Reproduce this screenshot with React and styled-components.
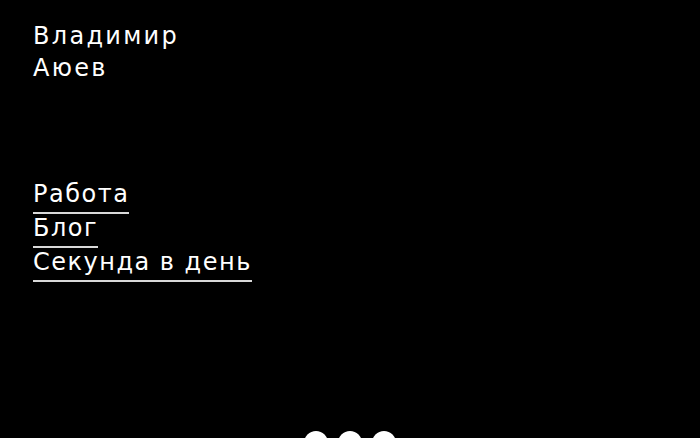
import React from 'react'
import styled, { createGlobalStyle } from 'styled-components'

const Global = createGlobalStyle`
  html, body {
    margin: 0;
    padding: 0;
    background: #000;
    overflow: hidden;
  }
  * { box-sizing: border-box; }
`

const Page = styled.div`
  height: 100vh;
  background: #000;
  color: #fff;
  font-family: "DejaVu Sans", "Liberation Sans", sans-serif;
  display: flex;
  flex-direction: column;
  padding: 20px 33px 0;
  overflow: hidden;
`

const Name = styled.div`
  font-size: 24px;
  line-height: 32px;
  letter-spacing: 2.3px;
`

const Nav = styled.nav`
  margin-top: 97px;
  display: flex;
  flex-direction: column;
  align-items: flex-start;
`

const Link = styled.a`
  font-size: 24px;
  line-height: 26px;
  color: #fff;
  text-decoration: none;
  border-bottom: 2px solid #d9d9d9;
  padding-bottom: 5px;
  margin-bottom: 1px;
  letter-spacing: 1.5px;
`

const Dots = styled.div`
  margin-top: auto;
  display: flex;
  justify-content: center;
  gap: 10px;
  height: 7px;
`

const Dot = styled.span`
  width: 24px;
  height: 24px;
  border-radius: 50%;
  background: #fff;
  flex: none;
`

const links = ['Работа', 'Блог', 'Секунда в день']

const App = () => {
  return (
    <Page>
      <Global />
      <Name>
        Владимир
        <br />
        Аюев
      </Name>
      <Nav>
        {links.map(l => (
          <Link key={l} href="#">{l}</Link>
        ))}
      </Nav>
      <Dots>
        <Dot />
        <Dot />
        <Dot />
      </Dots>
    </Page>
  )
}

export default App
